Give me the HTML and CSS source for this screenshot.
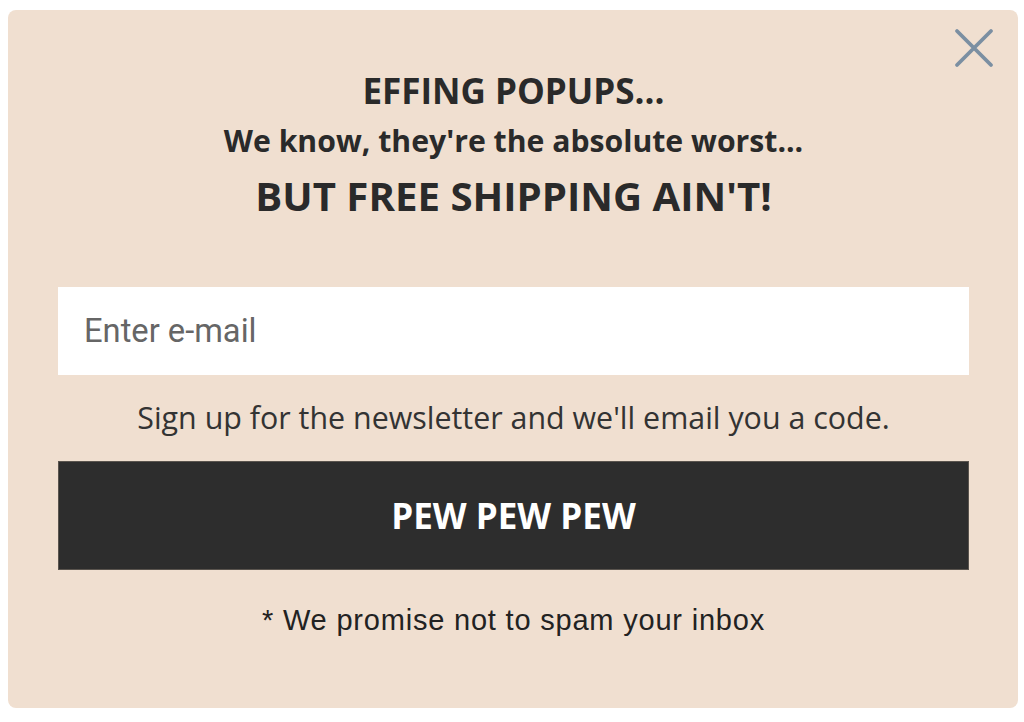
FILE: index.html
```html
<!DOCTYPE html>
<html>
<head>
<meta charset="utf-8">
<link rel="stylesheet" href="styles.css">
</head>
<body>
<div class="popup">
  <button class="close" aria-label="Close">
    <svg width="40" height="40" viewBox="0 0 40 40"><path d="M3 3 L37 37 M37 3 L3 37" stroke="#7b8fa2" stroke-width="3.8" stroke-linecap="round" fill="none"/></svg>
  </button>
  <h1 class="t1">EFFING POPUPS...</h1>
  <p class="t2">We know, they're the absolute worst...</p>
  <h2 class="t3">BUT FREE SHIPPING AIN'T!</h2>
  <div class="email">Enter e-mail</div>
  <p class="note">Sign up for the newsletter and we'll email you a code.</p>
  <div class="btn">PEW PEW PEW</div>
  <p class="promise">* We promise not to spam your inbox</p>
</div>
</body>
</html>
```
FILE: styles.css
```css
html, body { margin: 0; padding: 0; background: #fff; }
body { width: 1024px; height: 722px; overflow: hidden; }
.popup {
  position: relative;
  margin: 10px 6px 0 8px;
  height: 698px;
  background: #f0dfd0;
  border-radius: 8px;
  box-sizing: border-box;
  padding: 59px 49px 0 50px;
  display: flex;
  flex-direction: column;
  align-items: center;
  font-family: "Open Sans", sans-serif;
  color: #2a2a2a;
}
.close {
  position: absolute;
  top: 18px;
  right: 24px;
  background: none;
  border: 0;
  padding: 0;
  width: 40px;
  height: 40px;
}
.close svg { display: block; }
.t1 { margin: 0; font-size: 35px; font-weight: 700; line-height: 44px; }
.t2 { margin: 8px 0 0; font-size: 30.2px; font-weight: 700; line-height: 40px; }
.t3 { margin: 9px 0 0; font-size: 40.2px; font-weight: 700; line-height: 52px; }
.email {
  margin-top: 65px;
  align-self: stretch;
  height: 88px;
  background: #fff;
  font-family: Roboto, sans-serif;
  font-size: 32.7px;
  color: #666;
  display: flex;
  align-items: center;
  padding-left: 26px;
}
.note { margin: 23px 0 0; font-size: 30.4px; line-height: 40px; color: #333; }
.btn {
  margin-top: 23px;
  align-self: stretch;
  height: 109px;
  background: #2d2d2d;
  border: 1px solid #5a544e;
  box-sizing: border-box;
  color: #fff;
  font-size: 35px;
  font-weight: 700;
  display: flex;
  align-items: center;
  justify-content: center;
}
.promise { margin: 30px 0 0; font-family: "Liberation Sans", Arial, sans-serif; font-size: 29px; letter-spacing: 0.8px; line-height: 40px; color: #222; }
```
